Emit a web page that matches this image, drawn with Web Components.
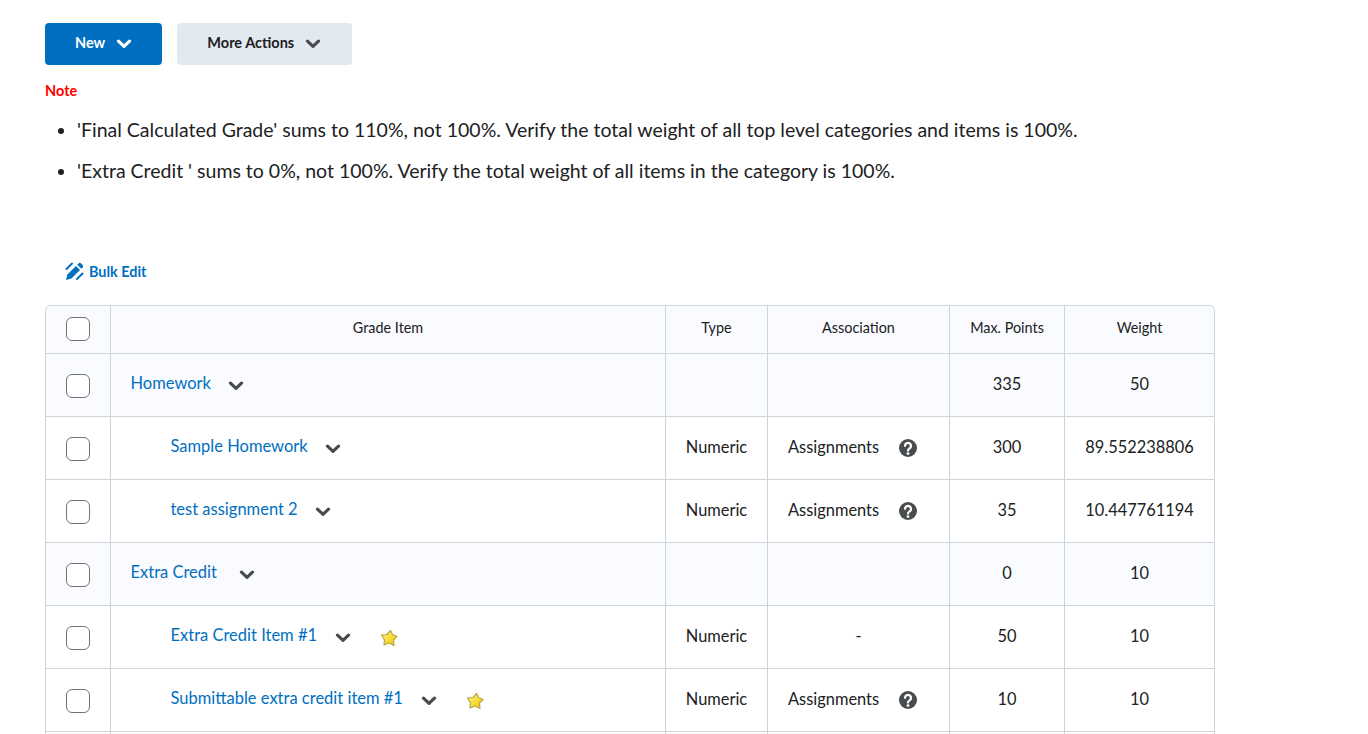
<!DOCTYPE html>
<html>
<head>
<meta charset="utf-8">
<style>
  html, body { margin: 0; height: 734px; overflow: hidden; background: #fff; }
  body { font-family: Lato, "Open Sans", sans-serif; color: #202122; }
</style>
</head>
<body>
<grades-page>
  <div slot="actions">
    <menu-button primary>New</menu-button>
    <menu-button>More Actions</menu-button>
  </div>
  <grade-notes slot="notes">
    <li>'Final Calculated Grade' sums to 110%, not 100%. Verify the total weight of all top level categories and items is 100%.</li>
    <li>'Extra Credit ' sums to 0%, not 100%. Verify the total weight of all items in the category is 100%.</li>
  </grade-notes>
  <bulk-edit slot="bulk">Bulk Edit</bulk-edit>
  <grade-table slot="table">
    <grade-row header name="Grade Item" type="Type" assoc="Association" points="Max. Points" weight="Weight"></grade-row>
    <grade-row category name="Homework" chevron-gap="17" points="335" weight="50"></grade-row>
    <grade-row child name="Sample Homework" chevron-gap="17" type="Numeric" assoc="Assignments" help points="300" weight="89.552238806"></grade-row>
    <grade-row child name="test assignment 2" chevron-gap="17" type="Numeric" assoc="Assignments" help points="35" weight="10.447761194"></grade-row>
    <grade-row category name="Extra Credit" chevron-gap="22" points="0" weight="10"></grade-row>
    <grade-row child name="Extra Credit Item #1" chevron-gap="18" star type="Numeric" assoc="-" points="50" weight="10"></grade-row>
    <grade-row child name="Submittable extra credit item #1" chevron-gap="18" star type="Numeric" assoc="Assignments" help points="10" weight="10"></grade-row>
    <grade-row></grade-row>
  </grade-table>
</grades-page>

<script>
const CHEVRON = `<svg width="16" height="10" viewBox="0 0 16 10"><path d="M2.5 2.2L8 7.4l5.5-5.2" fill="none" stroke="currentColor" stroke-width="3.2" stroke-linecap="round" stroke-linejoin="round"/></svg>`;

class GradesPage extends HTMLElement {
  constructor() {
    super();
    this.attachShadow({mode: 'open'}).innerHTML = `
      <style>
        :host { display: block; padding: 23px 0 0 45px; width: 1170px; }
        .notes { margin-top: 17px; }
        .bulk { margin-top: 79px; }
        .table { margin-top: 24px; }
      </style>
      <slot name="actions"></slot>
      <div class="notes"><slot name="notes"></slot></div>
      <div class="bulk"><slot name="bulk"></slot></div>
      <div class="table"><slot name="table"></slot></div>`;
  }
}

class MenuButton extends HTMLElement {
  constructor() {
    super();
    this.attachShadow({mode: 'open'}).innerHTML = `
      <style>
        :host { display: inline-flex; align-items: center; height: 42px; padding: 0 31px 3px 30px; gap: 11px; margin-right: 11px;
          border-radius: 4px; background: #e3e9f1; color: #202122; font: 700 14.5px Lato, sans-serif; box-sizing: border-box; vertical-align: top; }
        :host([primary]) { background: #006fbf; color: #fff; padding-right: 30px; }
        svg { display: block; margin-top: 3px; }
        :host(:not([primary])) svg { color: #494c4e; }
      </style>
      <slot></slot>${CHEVRON}`;
  }
}

class GradeNotes extends HTMLElement {
  constructor() {
    super();
    this.attachShadow({mode: 'open'}).innerHTML = `
      <style>
        :host { display: block; }
        .note { color: #f00; font: 700 14.5px/17px Lato, sans-serif; }
        .list { margin: 19px 0 0; padding-left: 32px; font: 400 19.5px/23px Lato, sans-serif; color: #202122; }
        ::slotted(li) { margin-bottom: 18px; }
      </style>
      <div class="note">Note</div>
      <ul class="list"><slot></slot></ul>`;
  }
}

class BulkEdit extends HTMLElement {
  constructor() {
    super();
    this.attachShadow({mode: 'open'}).innerHTML = `
      <style>
        :host { display: flex; align-items: center; gap: 5px; height: 20px; padding-left: 20px; color: #006fbf; font: 700 14.4px Lato, sans-serif; }
      </style>
      <svg width="19" height="19" viewBox="0 0 19 19"><g fill="currentColor">
        <path d="M1 18l1.4-5.4L11 4l4 4-8.6 8.6z"/>
        <path d="M12.3 2.7l1.4-1.4a1.6 1.6 0 0 1 2.2 0l1.8 1.8a1.6 1.6 0 0 1 0 2.2l-1.4 1.4z"/>
      </g><g stroke="currentColor" stroke-width="2" stroke-linecap="round" fill="none">
        <path d="M1.5 7L7 1.5"/><path d="M12 17l5.5-5.5"/>
      </g></svg>
      <slot></slot>`;
  }
}

class GradeTable extends HTMLElement {
  constructor() {
    super();
    this.attachShadow({mode: 'open'}).innerHTML = `
      <style>
        :host { display: block; border: 1px solid #cdd5dc; border-bottom: 0; border-radius: 6px 6px 0 0; overflow: hidden; box-sizing: border-box; width: 1170px; }
      </style>
      <slot></slot>`;
  }
}

class GradeRow extends HTMLElement {
  constructor() {
    super();
    const a = n => this.getAttribute(n) || '';
    const isHeader = this.hasAttribute('header');
    const help = `<svg class="help" width="18" height="18" viewBox="0 0 18 18"><circle cx="9" cy="9" r="9" fill="#494c4e"/><path d="M6 6.8a3 3 0 1 1 4.6 2.6c-1.1.7-1.6 1.1-1.6 2.1" fill="none" stroke="#fff" stroke-width="2.3" stroke-linecap="round"/><circle cx="9" cy="14.6" r="1.4" fill="#fff"/></svg>`;
    const star = `<svg class="star" width="18" height="18" viewBox="0 0 18 18"><defs><linearGradient id="g" x1="0" y1="0" x2="1" y2="1"><stop offset="0" stop-color="#fff48a"/><stop offset=".6" stop-color="#f5d92e"/><stop offset="1" stop-color="#e8c21a"/></linearGradient></defs><path d="M10.5 1.5L12.5 5.5 17 7.5 13.5 11 14 16.5 9 14 4 16 4.5 11 1.5 6 7 5.5z" fill="url(#g)" stroke="#b8a64a" stroke-width="1.2" stroke-linejoin="round"/></svg>`;
    const check = `<span class="check"></span>`;
    const gap = a('chevron-gap') || 18;
    const name = isHeader ? `<span>${a('name')}</span>` :
      a('name') ? `<a>${a('name')}</a><span class="chev" style="margin-left:${gap}px">${CHEVRON}</span>` : '';
    this.attachShadow({mode: 'open'}).innerHTML = `
      <style>
        :host { display: grid; grid-template-columns: 64px 555px 102px 182px 115px 150px; height: 63px; border-bottom: 1px solid #cdd5dc; box-sizing: border-box;
          font: 400 16.4px Lato, sans-serif; color: #202122; }
        :host([header]) { height: 48px; background: #f9fbff; font-size: 14.4px; }
        :host([category]) { background: #f9fbff; }
        .c { display: flex; align-items: center; justify-content: center; border-left: 1px solid #cdd5dc; box-sizing: border-box; min-width: 0; padding-bottom: 4px; }
        .c:first-of-type { border-left: 0; padding-bottom: 0; }
        .name { justify-content: flex-start; padding: 0 0 2px 20px; }
        :host([child]) .name { padding-left: 60px; }
        :host([header]) .name { justify-content: center; padding: 0 0 4px; }
        a { color: #006fbf; position: relative; top: -1px; font-size: 16.5px; margin-left: -.5px; }
        .chev { color: #494c4e; display: flex; position: relative; top: 2px; }
        .check { width: 24px; height: 24px; border: 1px solid #6e7477; border-radius: 6px; background: #fff; box-sizing: border-box; position: relative; top: 1px; }
        :host([header]) .check { top: -.5px; }
        .assoc { justify-content: flex-start; padding: 0 0 2px 20px; }
        .assoc.bare, :host([header]) .assoc { justify-content: center; padding: 0 0 4px; }
        .assoc.bare span { top: 0; }
        .assoc span { position: relative; top: -1px; }
        .help { margin-left: 20px; position: relative; top: 1px; }
        .star { margin-left: 29px; position: relative; top: 2px; }
        svg { display: block; }
      </style>
      <div class="c">${check}</div>
      <div class="c name">${name}${this.hasAttribute('star') ? star : ''}</div>
      <div class="c">${a('type')}</div>
      <div class="c assoc ${this.hasAttribute('help') ? '' : 'bare'}"><span>${a('assoc')}</span>${this.hasAttribute('help') ? help : ''}</div>
      <div class="c">${a('points')}</div>
      <div class="c">${a('weight')}</div>`;
  }
}

customElements.define('grades-page', GradesPage);
customElements.define('menu-button', MenuButton);
customElements.define('grade-notes', GradeNotes);
customElements.define('bulk-edit', BulkEdit);
customElements.define('grade-table', GradeTable);
customElements.define('grade-row', GradeRow);
</script>
</body>
</html>
